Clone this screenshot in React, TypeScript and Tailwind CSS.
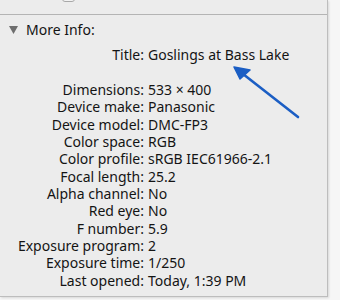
import React from 'react';

const ROWS: [string, string][] = [
  ['Dimensions', '533 × 400'],
  ['Device make', 'Panasonic'],
  ['Device model', 'DMC-FP3'],
  ['Color space', 'RGB'],
  ['Color profile', 'sRGB IEC61966-2.1'],
  ['Focal length', '25.2'],
  ['Alpha channel', 'No'],
  ['Red eye', 'No'],
  ['F number', '5.9'],
  ['Exposure program', '2'],
  ['Exposure time', '1/250'],
  ['Last opened', 'Today, 1:39 PM'],
];

function Row({ label, value }: { label: string; value: string }) {
  return (
    <div className="flex h-[17.35px] items-center">
      <span className="w-[144px] shrink-0 text-right">{label}:</span>
      <span className="ml-[4px] whitespace-nowrap">{value}</span>
    </div>
  );
}

export default function App() {
  return (
    <div
      className="relative h-[300px] w-[340px] overflow-hidden bg-[#f6f6f6] text-[14px] leading-none text-[#141414]"
      style={{ fontFamily: '"Noto Sans", "Lucida Grande", sans-serif' }}
    >
      <div className="h-[297px] w-[328px] border-r border-b border-[#bdbdbd] bg-[#ececec] shadow-[1px_1px_2px_rgba(0,0,0,0.12)]">
        {/* strip above the divider, with the foot of a checkbox */}
        <div className="relative h-[15px] border-b border-[#b4b4b4]">
          <div className="absolute left-[62px] top-[-10px] h-[12px] w-[13px] rounded-[3px] border border-[#a8a8a8] bg-[#f2f2f2]" />
        </div>

        <div className="flex h-[28px] items-center pl-[9px] pt-[1px]">
          <svg width="9" height="8" viewBox="0 0 9 8" className="mr-[8px]">
            <path d="M0 0 H9 L4.5 8 Z" fill="#6e6e6e" />
          </svg>
          <span>More Info:</span>
        </div>

        <div className="mt-[3px] flex h-[17.35px] items-center">
          <span className="w-[144px] shrink-0 text-right">Title:</span>
          <span className="ml-[4px] whitespace-nowrap">Goslings at Bass Lake</span>
        </div>

        <div className="mt-[18px]">
          {ROWS.map(([l, v]) => (
            <Row key={l} label={l} value={v} />
          ))}
        </div>
      </div>

      <svg className="absolute left-0 top-0" width="340" height="300" viewBox="0 0 340 300">
        <line x1="298" y1="117" x2="243" y2="74" stroke="#1b5ec4" strokeWidth="2.6" strokeLinecap="round" />
        <path d="M234 67 L250 70 L240 79 Z" fill="#1b5ec4" stroke="#1b5ec4" strokeWidth="1.5" strokeLinejoin="round" />
      </svg>
    </div>
  );
}
